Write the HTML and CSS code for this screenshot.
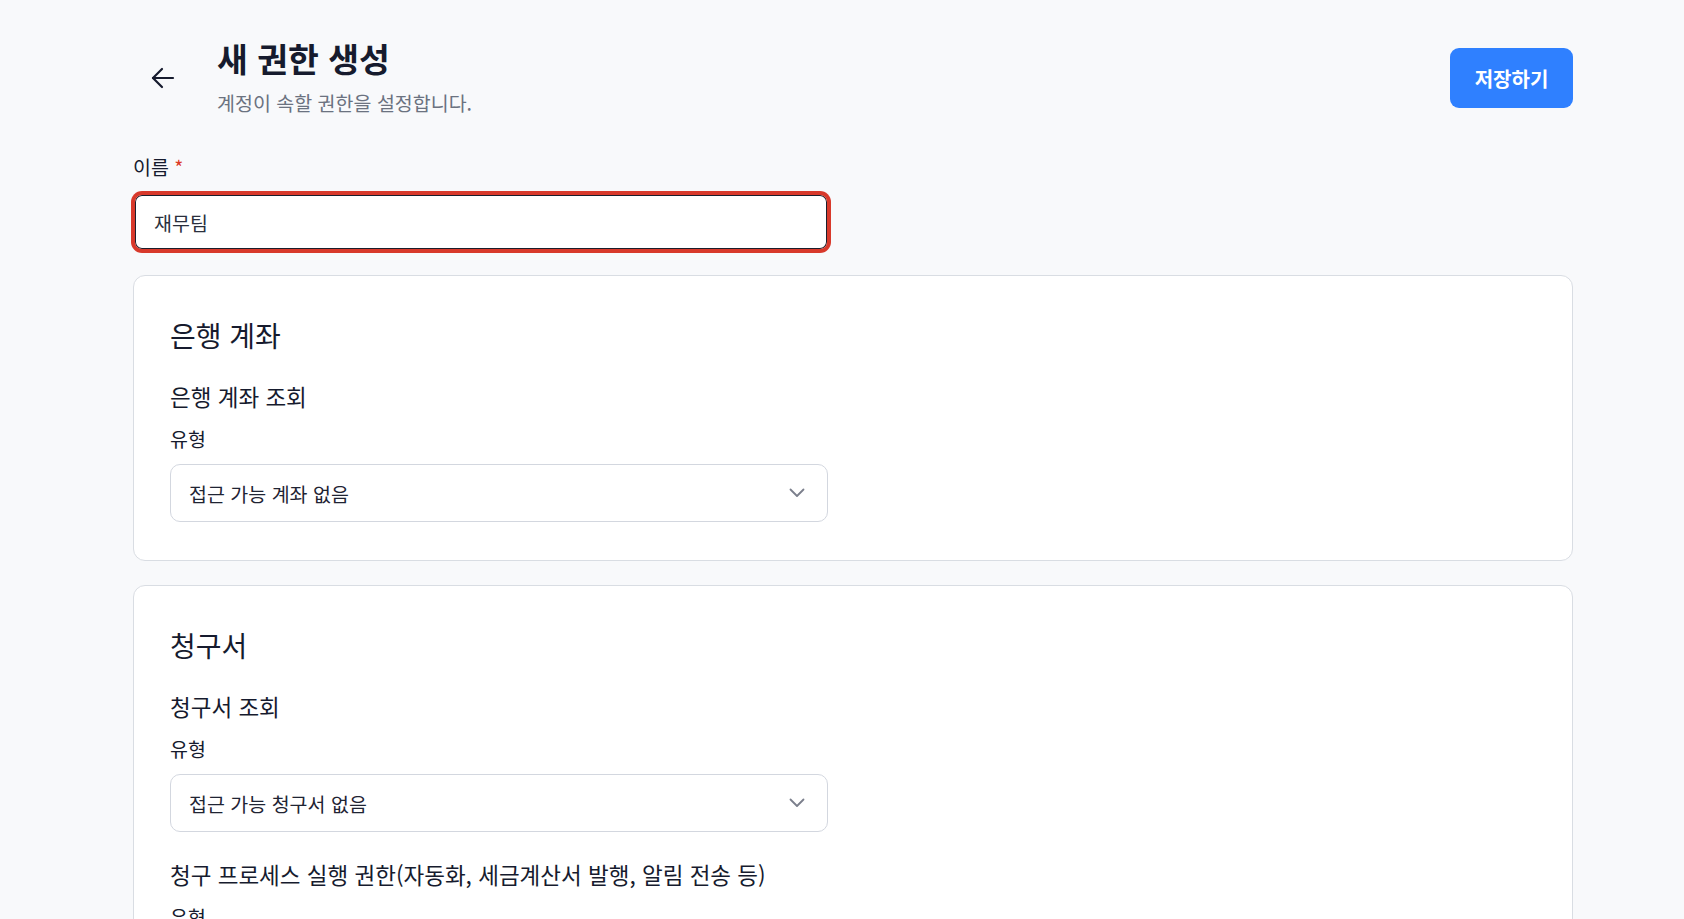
FILE: index.html
```html
<!DOCTYPE html>
<html lang="ko">
<head>
<meta charset="utf-8">
<title>새 권한 생성</title>
<link rel="stylesheet" href="styles.css">
</head>
<body>
<div class="page">
  <header class="header">
    <button class="back" type="button" aria-label="뒤로">
      <svg width="24" height="24" viewBox="0 0 24 24" fill="none" stroke="currentColor" stroke-width="2.2" stroke-linecap="round" stroke-linejoin="round"><path d="M22 12H2"/><path d="M11 3L2 12L11 21"/></svg>
    </button>
    <div class="titles">
      <h1 class="title">새 권한 생성</h1>
      <p class="subtitle">계정이 속할 권한을 설정합니다.</p>
    </div>
    <button class="save" type="button">저장하기</button>
  </header>

  <div class="field">
    <label class="name-label">이름 <span class="req">*</span></label>
    <div class="name-input">재무팀</div>
  </div>

  <section class="card">
    <h2 class="card-title">은행 계좌</h2>
    <div class="group">
      <h3 class="group-title">은행 계좌 조회</h3>
      <div class="type-label">유형</div>
      <div class="select">
        <span>접근 가능 계좌 없음</span>
        <svg class="chev" width="16" height="10" viewBox="0 0 16 10" fill="none" stroke="currentColor" stroke-width="1.8" stroke-linecap="round" stroke-linejoin="round"><path d="M1.5 1.5L8 8L14.5 1.5"/></svg>
      </div>
    </div>
  </section>

  <section class="card">
    <h2 class="card-title">청구서</h2>
    <div class="group">
      <h3 class="group-title">청구서 조회</h3>
      <div class="type-label">유형</div>
      <div class="select">
        <span>접근 가능 청구서 없음</span>
        <svg class="chev" width="16" height="10" viewBox="0 0 16 10" fill="none" stroke="currentColor" stroke-width="1.8" stroke-linecap="round" stroke-linejoin="round"><path d="M1.5 1.5L8 8L14.5 1.5"/></svg>
      </div>
    </div>
    <div class="group">
      <h3 class="group-title">청구 프로세스 실행 권한(자동화, 세금계산서 발행, 알림 전송 등)</h3>
      <div class="type-label">유형</div>
      <div class="select">
        <span>접근 불가</span>
        <svg class="chev" width="16" height="10" viewBox="0 0 16 10" fill="none" stroke="currentColor" stroke-width="1.8" stroke-linecap="round" stroke-linejoin="round"><path d="M1.5 1.5L8 8L14.5 1.5"/></svg>
      </div>
    </div>
  </section>
</div>
</body>
</html>
```

FILE: styles.css
```css
* { box-sizing: border-box; }
html, body {
  margin: 0;
  padding: 0;
  background: #f8f9fb;
  font-family: "Noto Sans CJK KR", "Noto Sans", sans-serif;
  color: #161b2e;
}
.page {
  width: 1684px;
  padding: 37px 111px 40px 133px;
}
.header {
  display: flex;
  align-items: flex-start;
}
.back {
  width: 60px;
  height: 48px;
  margin: 17px 24px 0 0;
  display: flex;
  align-items: center;
  justify-content: center;
  background: none;
  border: 0;
  padding: 0;
  color: #161b2e;
  cursor: pointer;
}
.titles { flex: 1; }
.title {
  margin: 0;
  font-size: 33.5px;
  line-height: 42px;
  font-weight: 700;
  color: #161b2e;
}
.subtitle {
  margin: 12px 0 0;
  font-size: 19.5px;
  line-height: 24px;
  color: #6b7280;
}
.save {
  margin-top: 11px;
  width: 123px;
  height: 60px;
  border: 0;
  border-radius: 9px;
  background: #2f80ff;
  color: #fff;
  font-family: inherit;
  font-size: 20px;
  font-weight: 700;
  cursor: pointer;
}
.field {
  margin-top: 39px;
  width: 696px;
}
.name-label {
  display: block;
  font-size: 19.5px;
  line-height: 26px;
  color: #161b2e;
}
.req { color: #dc3a26; }
.name-input {
  margin-top: 13px;
  height: 58px;
  border: 2px solid #d8392b;
  border-radius: 9px;
  box-shadow: 0 0 0 2px #d8392b, inset 0 0 0 1px #1b1e2c;
  background: #fff;
  display: flex;
  align-items: center;
  padding-left: 19px;
  font-size: 19.5px;
  color: #2a2f3d;
}
.card {
  margin-top: 24px;
  background: #fff;
  border: 1px solid #d9dde3;
  border-radius: 12px;
  padding: 41px 36px 38px 36px;
}
.card-title {
  margin: 0;
  font-size: 28px;
  line-height: 36px;
  font-weight: 400;
  color: #161b2e;
}
.group { margin-top: 28px; }
.group + .group { margin-top: 27px; }
.group-title {
  margin: 0;
  font-size: 22.5px;
  line-height: 30px;
  font-weight: 400;
  color: #161b2e;
}
.type-label {
  margin-top: 15px;
  font-size: 19.5px;
  line-height: 26px;
  color: #161b2e;
}
.select {
  margin-top: 12px;
  width: 658px;
  height: 58px;
  border: 1px solid #d3d7df;
  border-radius: 10px;
  background: #fff;
  display: flex;
  align-items: center;
  justify-content: space-between;
  padding: 0 22px 0 18px;
  font-size: 19.5px;
  color: #1f2433;
}
.chev { color: #7b7f8c; }
```
